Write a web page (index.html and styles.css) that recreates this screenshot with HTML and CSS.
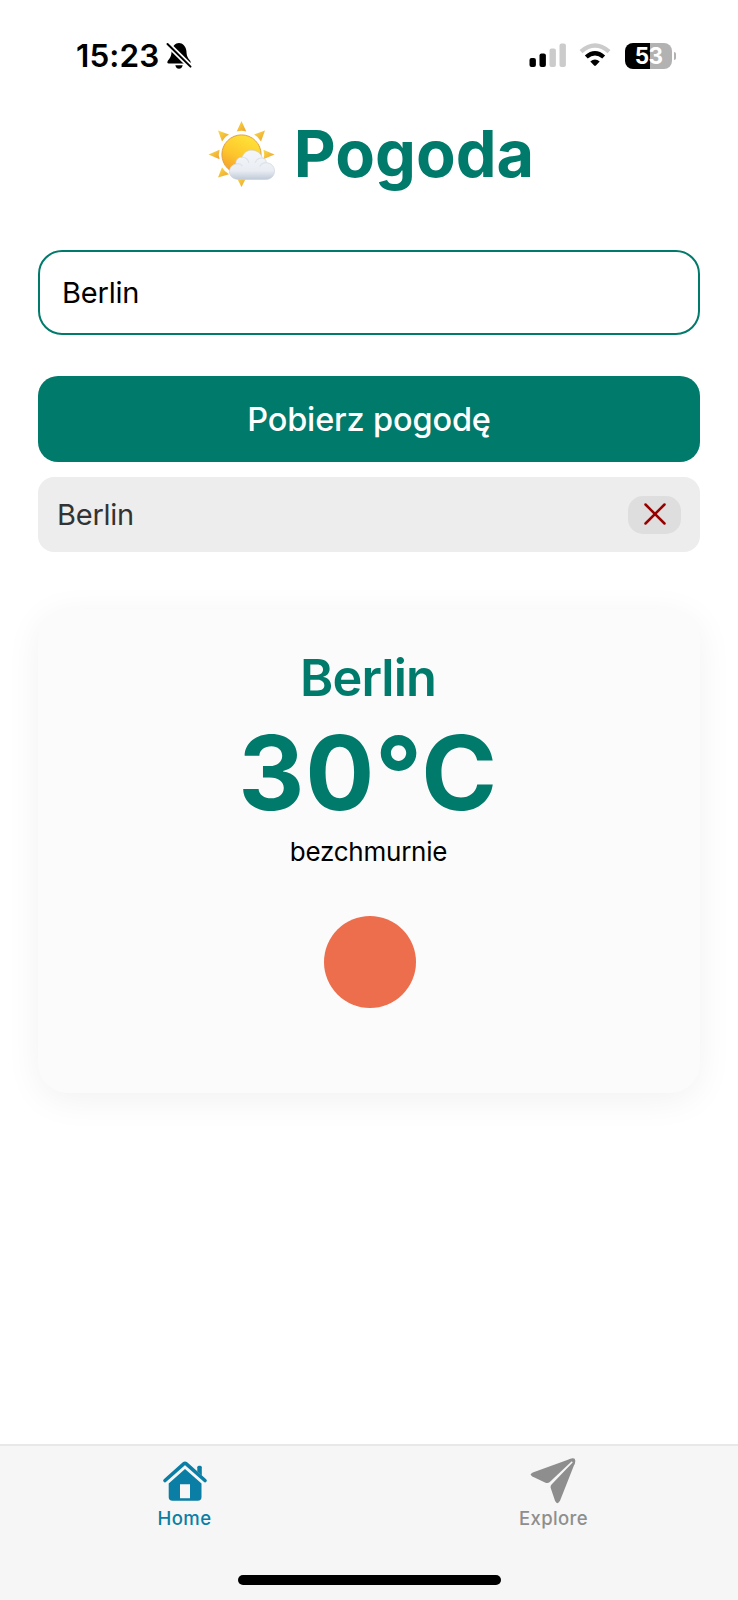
FILE: index.html
```
<!DOCTYPE html>
<html lang="pl">
<head>
<meta charset="utf-8">
<title>Pogoda</title>
<link rel="stylesheet" href="styles.css">
</head>
<body>
<div class="screen">
  <header class="status">
    <div class="status-left">
      <span class="clock">15:23</span>
      <svg class="bell" viewBox="0 0 26 28" width="26" height="28">
        <path d="M13 1C9.500 1 6 4.500 5.600 9C5.300 14 4.500 15.500 2 18.500Q.3 21.400 2.800 21.400H23.200Q25.700 21.400 24 18.500C21.500 15.500 20.700 14 20.400 9C20 4.500 16.500 1 13 1Z"/>
        <path d="M9.300 23.200H16.700Q15.800 26.800 13 26.800Q10.200 26.800 9.300 23.200Z"/>
        <path class="bell-gap" d="M.5 1L25.500 25.600"/>
        <path class="bell-slash" d="M1.500 2L24.500 24.600"/>
      </svg>
    </div>
    <div class="status-right">
      <svg width="38" height="25" viewBox="0 0 38 25">
        <rect x="0.500" y="15" width="6.400" height="9" rx="2"/>
        <rect x="10.500" y="10.400" width="6.400" height="13.600" rx="2"/>
        <rect class="dim" x="20.500" y="5.400" width="6.400" height="18.600" rx="2"/>
        <rect class="dim" x="30.500" y="0.500" width="6.400" height="23.500" rx="2"/>
      </svg>
      <svg class="wifi" width="32" height="25" viewBox="0 0 32 25">
        <path class="dim-line" d="M2 8.600Q16-3.600 30 8.600"/>
        <path class="wifi-line" d="M7.300 14Q16 6.300 24.700 14"/>
        <path d="M11.300 18.400Q16 14.400 20.700 18.400L16.900 22.600Q16 23.500 15.100 22.600Z"/>
      </svg>
      <div class="battery"><span class="battery-level">53</span></div>
      <span class="battery-cap"></span>
    </div>
  </header>

  <main class="content">
    <h1 class="title">
      <svg class="title-icon" width="66" height="66" viewBox="0 0 66 66">
        <defs>
          <linearGradient id="sun" x1=".7" y1="0" x2=".2" y2="1"><stop offset="0" stop-color="#ffe338"/><stop offset=".55" stop-color="#fdc62c"/><stop offset="1" stop-color="#f29a2c"/></linearGradient>
          <linearGradient id="ray" x1="0" y1="0" x2="1" y2="1"><stop offset="0" stop-color="#f8dc45"/><stop offset="1" stop-color="#f0a02e"/></linearGradient>
          <linearGradient id="cloud" x1="0" y1="0" x2="0" y2="1"><stop offset="0" stop-color="#f4f6f9"/><stop offset=".7" stop-color="#e9edf3"/><stop offset="1" stop-color="#bfc9d8"/></linearGradient>
        </defs>
        <g fill="url(#ray)">
          <path d="M32.500 0L37.300 10.600Q32.500 8.800 27.700 10.600Z"/>
          <path d="M56 9.400L52 20.400Q49.600 16 45 13.600Z"/>
          <path d="M9 9.400L20 13.600Q15.400 16 13 20.400Z"/>
          <path d="M-.5 33.500L10.600 28.700Q9 33.500 10.600 38.300Z"/>
          <path d="M9 56.600L13 46.200Q15.400 50.600 20 53.200Z"/>
          <path d="M32.500 66L27.700 56.500Q32.500 58 37.300 56.500Z"/>
          <path d="M65.500 33.500L54.400 28.700Q56 33.500 54.400 38.300Z"/>
        </g>
        <circle cx="32.500" cy="33.500" r="19.600" fill="url(#sun)" stroke="#e4a13a" stroke-width="1"/>
        <path d="M30.500 58.500C24.300 58.500 20.500 55.300 20.500 50.800C20.500 46.700 23 43.600 26.800 43.100C26.500 38.700 29.500 36 33 36.300C34.700 31.500 38.200 29.200 42.600 29.200C47.700 29.200 52.300 32.400 53.300 37C56.500 37.500 57.600 39.600 57 41.600C62 42 65.500 45.200 65.500 49.900C65.500 55.200 61.500 58.500 56.400 58.500Z" fill="url(#cloud)" stroke="#c9d0dc" stroke-width=".6"/>
        <path d="M27 43.100C29.500 42.200 32 43.200 33.400 45.200M33 36.300C36.500 36 39.600 38.600 39.800 42M53.300 37C50 36.900 47.200 39 46.200 41.600M57 41.600C54.500 41.600 52 43 50.800 45.500" fill="none" stroke="#dde2ea" stroke-width="1.200"/>
      </svg>
      <span class="title-text">Pogoda</span>
    </h1>

    <input class="city-input" type="text" value="Berlin" aria-label="Miasto">
    <button class="fetch">Pobierz pogodę</button>

    <div class="saved">
      <span>Berlin</span>
      <button class="remove" aria-label="Usuń">
        <svg width="22" height="22" viewBox="0 0 22 22"><path d="M1.500 1.500L20.500 20.500M20.500 1.500L1.500 20.500"/></svg>
      </button>
    </div>

    <section class="card">
      <h2 class="city">Berlin</h2>
      <p class="temp">30°C</p>
      <p class="desc">bezchmurnie</p>
      <div class="sun"></div>
    </section>
  </main>

  <nav class="tabs">
    <div class="tab-row">
      <a class="tab active">
        <svg width="46" height="44" viewBox="0 0 46 44">
          <path class="roof" d="M3 20.500L21.700 3.800Q23 2.700 24.300 3.800L43 20.500"/>
          <path d="M35.300 7.300Q35.300 5.800 36.800 5.800H38.300Q39.800 5.800 39.800 7.300V15.500L35.300 11.500Z"/>
          <path fill-rule="evenodd" d="M23 9L39.500 23.500V37Q39.500 40.800 35.700 40.800H10.500Q6.700 40.800 6.700 37V23.500ZM18 24.300V38.300H28V24.300Z"/>
        </svg>
        <span class="tab-label">Home</span>
      </a>
      <a class="tab">
        <svg class="plane" width="46" height="46" viewBox="0 0 46 46">
          <path d="M40 .9L2.800 14.500Q-1 16.200 2.400 18.500L15.500 24.800Q18 25.700 19.800 24L42.600 2.400Q42 .3 40 .9Z"/>
          <path d="M43.600 3.400L21.800 26.300Q20 28 20.800 30.300L25 42.800Q27.200 47.500 30 42.800L44.800 5.200Q45.300 3 43.600 3.400Z"/>
          <path d="M38.500 1.400L42.300.3Q45.900-.1 45.200 3.900L44 7.300L42.700 4.300L41.500 3.100Z"/>
        </svg>
        <span class="tab-label">Explore</span>
      </a>
    </div>
    <div class="home-indicator"></div>
  </nav>
</div>
</body>
</html>
```
FILE: styles.css
```
* { box-sizing: border-box; }
body { margin: 0; background: #fff; font-family: Inter, "Liberation Sans", sans-serif; color: #000; }
h1, h2, p { margin: 0; }
button, input { font-family: inherit; }

.screen { width: 738px; height: 1600px; display: flex; flex-direction: column; overflow: hidden; }

.status { height: 110px; padding: 1px 62px 0 76px; display: flex; justify-content: space-between; align-items: center; }
.status-left, .status-right { display: flex; align-items: center; }
.clock { font-size: 31.500px; font-weight: 600; letter-spacing: 0.100px; line-height: 40px; }
.bell { margin-left: 7px; }
.bell-gap { stroke: #fff; stroke-width: 5.500; }
.bell-slash { stroke: #000; stroke-width: 2; stroke-linecap: round; }
.dim { fill: #cbcbcb; }
.wifi { margin-left: 12px; }
.dim-line { fill: none; stroke: #cbcbcb; stroke-width: 4.300; }
.wifi-line { fill: none; stroke: #000; stroke-width: 4.300; }
.battery { margin-left: 14px; width: 47px; height: 26px; border-radius: 8px; background: linear-gradient(90deg, #000 53%, #b2b2b2 53%); display: flex; align-items: center; justify-content: center; }
.battery-level { color: #fff; font-size: 22.500px; font-weight: 700; line-height: 26px; letter-spacing: -0.600px; }
.battery-cap { margin-left: 1.500px; width: 2.500px; height: 8px; border-radius: 0 3px 3px 0; background: #b2b2b2; }

.content { padding: 0 38px; flex: 1; display: flex; flex-direction: column; }
.title { height: 87px; display: flex; align-items: center; justify-content: center; gap: 19px; color: #007a6b; padding-left: 5px; }
.title-icon { margin-top: 1px; overflow: visible; }
.title-text { font-size: 64.800px; font-weight: 700; line-height: 85px; letter-spacing: 0; }

.city-input { margin: 53px 0 0; height: 85px; width: 100%; padding: 0 22px; border: 2px solid #007a6b; border-radius: 24px; background: #fff; color: #000; font-size: 29px; letter-spacing: -0.200px; outline: none; }
.fetch { margin-top: 41px; height: 86px; border: 0; border-radius: 20px; background: #007a6b; color: #fff; font-size: 32.500px; font-weight: 500; letter-spacing: -0.150px; padding: 0; }
.saved { margin-top: 15px; height: 75px; padding: 0 19px; border-radius: 16px; background: #ededed; color: #333; display: flex; align-items: center; justify-content: space-between; font-size: 29px; letter-spacing: -0.250px; }
.remove { width: 53px; height: 38px; padding: 0 0 1px; border: 0; border-radius: 15px; background: #dedede; display: flex; align-items: center; justify-content: center; }
.remove path { stroke: #980000; stroke-width: 2.500; stroke-linecap: round; }

.card { margin-top: 57px; height: 484px; padding-top: 37px; border-radius: 30px; background: #fbfbfb; box-shadow: 0 7px 36px rgba(0, 0, 0, .06); display: flex; flex-direction: column; align-items: center; }
.city { color: #007a6b; font-size: 50.500px; font-weight: 600; line-height: 63px; letter-spacing: -0.900px; margin-right: 2px; }
.temp { color: #007a6b; font-size: 102.500px; font-weight: 700; line-height: 129px; letter-spacing: 0.800px; margin-right: 2px; }
.desc { font-size: 26px; line-height: 31px; letter-spacing: -0.250px; margin: -2px 1px 0 0; }
.sun { margin: 49px 0 0 2px; width: 92px; height: 92px; border-radius: 50%; background: #ec6e4d; }

.tabs { height: 156px; border-top: 2px solid #e8e8e8; background: #f6f6f6; display: flex; flex-direction: column; align-items: center; justify-content: space-between; padding-bottom: 15px; }
.tab-row { width: 100%; display: flex; }
.tab { flex: 1; height: 84px; padding-top: 12px; display: flex; flex-direction: column; align-items: center; justify-content: space-between; color: #8e8e8e; fill: currentColor; }
.plane { margin-right: 1px; }
.active { color: #0a7ea4; padding-top: 14px; }
.roof { fill: none; stroke: currentColor; stroke-width: 3.600; stroke-linecap: round; }
.tab-label { font-size: 18.500px; font-weight: 500; line-height: 24px; letter-spacing: .4px; }
.home-indicator { width: 263px; height: 10px; border-radius: 5px; background: #000; }
```
